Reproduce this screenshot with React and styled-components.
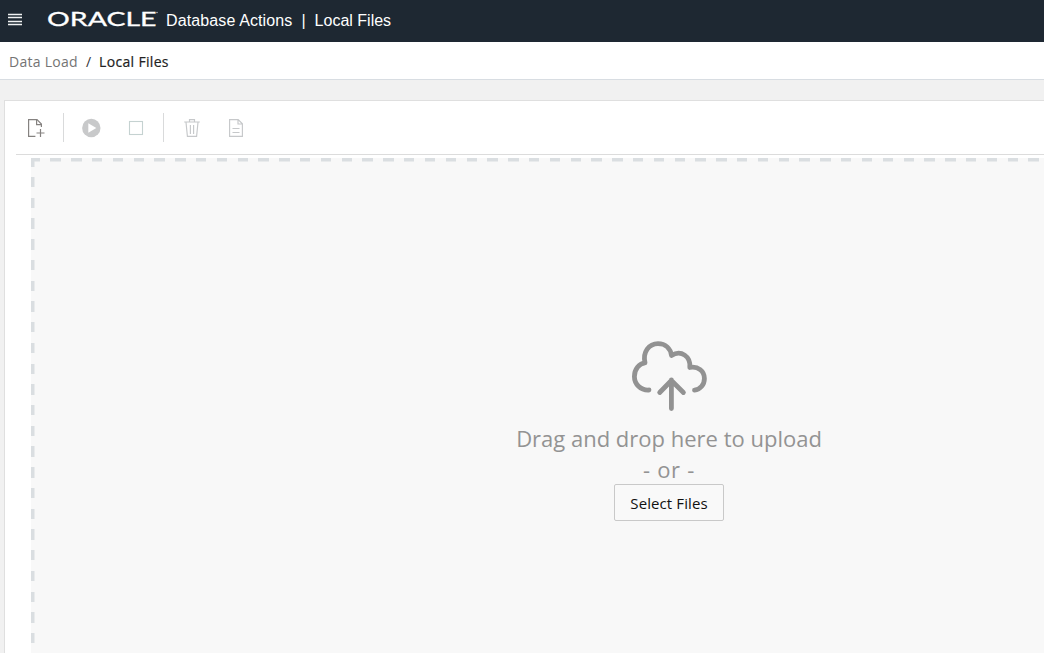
import React from "react";
import styled, { createGlobalStyle } from "styled-components";

const GlobalStyle = createGlobalStyle`
  * { box-sizing: border-box; }
  body {
    margin: 0;
    overflow: hidden;
    background: #f1f1f1;
    font-family: "Open Sans", "Noto Sans", sans-serif;
  }
`;

const Page = styled.div`
  height: 100vh;
  display: flex;
  flex-direction: column;
`;

const Header = styled.header`
  flex: none;
  height: 42px;
  padding: 0 0 1px 8px;
  display: flex;
  align-items: center;
  background: #1e2832;
  color: #fff;
`;

const MenuIcon = styled.svg`
  display: block;
  margin: -3px 25px 0 0;
`;

const Logo = styled.svg`
  display: block;
  margin: -4px 7px 0 0;
`;

const ProductName = styled.div`
  display: flex;
  font: 16px/20px "Liberation Sans", Arial, sans-serif;
  white-space: pre;
`;

const Product = styled.span`
  letter-spacing: 0.12px;
`;

const Divider = styled.span`
  margin: 0 9px;
`;

const Breadcrumbs = styled.nav`
  flex: none;
  height: 38px;
  padding: 2px 0 0 9px;
  display: flex;
  align-items: center;
  background: #fff;
  border-bottom: 1px solid #d8dde2;
  font-size: 14px;
  line-height: 20px;
`;

const Crumb = styled.span`
  color: ${(p) => (p.$current ? "#222" : "#747474")};
  letter-spacing: ${(p) => (p.$current ? "0.32px" : "0.28px")};
  -webkit-text-stroke: ${(p) => (p.$current ? "0.2px #222" : "0")};
`;

const Slash = styled.span`
  margin: 0 8px;
  color: #333;
`;

const Panel = styled.main`
  flex: 1;
  margin: 20px 0 0 4px;
  background: #fff;
  border: solid #dfdfdf;
  border-width: 1px 0 0 1px;
  display: flex;
  flex-direction: column;
`;

const Toolbar = styled.div`
  flex: none;
  height: 54px;
  margin-left: 11px;
  padding-left: 10px;
  display: flex;
  align-items: center;
  border-bottom: 1px solid #dcdcdc;
`;

const ToolButton = styled.button`
  width: 20px;
  height: 20px;
  margin-right: ${(p) => p.$gap || 0}px;
  padding: 0;
  border: 0;
  background: none;
  color: #c6c8ca;
  svg { display: block; }
`;

const Separator = styled.span`
  width: 1px;
  height: 29px;
  margin-right: ${(p) => p.$gap}px;
  background: #d9dadb;
`;

const DropZone = styled.section`
  flex: 1;
  margin: 3px 0 0 26px;
  padding: 183px 0 0 263px;
  display: flex;
  background-color: #f8f8f8;
  background-image:
    repeating-linear-gradient(90deg, #dadee1 0 10.4px, transparent 10.4px 20.81px),
    repeating-linear-gradient(180deg, #dadee1 0 10.4px, transparent 10.4px 20.73px);
  background-size: 1100px 3.5px, 3.5px 600px;
  background-position: -1.5px 0, 0 -1.8px;
  background-repeat: no-repeat;
`;

const Prompt = styled.div`
  width: 750px;
  display: flex;
  flex-direction: column;
  align-items: center;
`;

const CloudIcon = styled.svg`
  display: block;
  flex: none;
`;

const Message = styled.div`
  height: 31px;
  color: #939393;
  font-size: 22px;
  line-height: 31px;
  letter-spacing: ${(p) => p.$spacing || "0"};
  white-space: nowrap;
`;

const SelectButton = styled.button`
  width: 110px;
  height: 37px;
  margin-top: -1px;
  padding: 0;
  border: 1px solid #c9c9c9;
  border-radius: 2px;
  background: #f9f9f9;
  color: #111;
  font: 15px/20px "Open Sans", "Noto Sans", sans-serif;
  letter-spacing: 0.1px;
`;

function FileAddIcon() {
  return (
    <svg width="20" height="20" viewBox="0 0 20 20" fill="none" stroke="#858280" strokeWidth="1.2">
      <path d="M9.4 18.4H2.6V1.6H11l4.4 4.4v3" />
      <path d="M10.6 1.6v5h4.8M14.5 11v8M10.5 15h8" />
    </svg>
  );
}

function PlayIcon() {
  return (
    <svg width="20" height="20" viewBox="0 0 20 20">
      <circle cx="10.3" cy="10" r="9.2" fill="#c8c9ca" />
      <path d="M7.3 5.3v9.4l8-4.7z" fill="#fff" />
    </svg>
  );
}

function StopIcon() {
  return (
    <svg width="20" height="20" viewBox="0 0 20 20" fill="none" stroke="#c5d2d1" strokeWidth="1.1">
      <rect x="3.5" y="3.5" width="13" height="13" />
    </svg>
  );
}

function TrashIcon() {
  return (
    <svg width="20" height="20" viewBox="0 0 20 20" fill="none" stroke="currentColor" strokeWidth="1.15">
      <path d="M2.2 4h15.6M7.5 4V1.6h5V4M4 4.2l1.4 14.2h9.2L16 4.2M8.4 7v9M11.6 7v9" />
    </svg>
  );
}

function FileTextIcon() {
  return (
    <svg width="20" height="20" viewBox="0 0 20 20" fill="none" stroke="currentColor" strokeWidth="1.15">
      <path d="M3.6 1.6h8.6l4.2 4.2v12.6H3.6zM12 1.6V6h4.4M6.5 10.5h7M6.5 14.5h7" />
    </svg>
  );
}

export default function App() {
  return (
    <Page>
      <GlobalStyle />
      <Header>
        <MenuIcon width="14" height="13" viewBox="0 0 14 13">
          <path d="M0 1.5h14M0 4.5h14M0 8.5h14M0 11.5h14" stroke="#f0f1f2" strokeWidth="1.3" />
        </MenuIcon>
        <Logo width="112" height="27" viewBox="0 0 112 27" fill="#fff" fontFamily="Lato, sans-serif" fontWeight="400" stroke="#fff" strokeWidth="0.3">
          <text x="0" y="20.7" fontSize="19.5" textLength="109.5" lengthAdjust="spacingAndGlyphs">ORACLE</text>
          <circle cx="110" cy="7.5" r="0.8" fill="#b5b9be" stroke="none" />
        </Logo>
        <ProductName>
          <Product>Database Actions</Product>
          <Divider>|</Divider>
          <span>Local Files</span>
        </ProductName>
      </Header>
      <Breadcrumbs>
        <Crumb>Data Load</Crumb>
        <Slash>/</Slash>
        <Crumb $current>Local Files</Crumb>
      </Breadcrumbs>
      <Panel>
        <Toolbar>
          <ToolButton $gap={17} aria-label="Add files"><FileAddIcon /></ToolButton>
          <Separator $gap={17} />
          <ToolButton $gap={25} aria-label="Run"><PlayIcon /></ToolButton>
          <ToolButton $gap={17} aria-label="Stop"><StopIcon /></ToolButton>
          <Separator $gap={18} />
          <ToolButton $gap={24} aria-label="Delete"><TrashIcon /></ToolButton>
          <ToolButton aria-label="View log"><FileTextIcon /></ToolButton>
        </Toolbar>
        <DropZone>
          <Prompt>
            <CloudIcon width="76" height="82" viewBox="0 0 76 82" fill="none" stroke="#929292" strokeWidth="4.8" strokeLinecap="round" strokeLinejoin="round">
              <path d="M18 49C9.5 49.5 3.4 43 3.4 35.5C3.4 28 8.5 22.2 14 21.8C11.5 11 18 2.6 27 2.6C34.5 2.6 39.5 7.5 40.5 14.5C50 8.5 60 15.5 58.8 26.5C67 25 73.4 30 73.4 37.5C73.4 43.5 69.5 48.5 63.5 49.2" />
              <path d="M40.4 67.5V39M28.7 51.5L40.4 39.5l12 12" />
            </CloudIcon>
            <Message>Drag and drop here to upload</Message>
            <Message $spacing="0.7px">- or -</Message>
            <SelectButton>Select Files</SelectButton>
          </Prompt>
        </DropZone>
      </Panel>
    </Page>
  );
}
